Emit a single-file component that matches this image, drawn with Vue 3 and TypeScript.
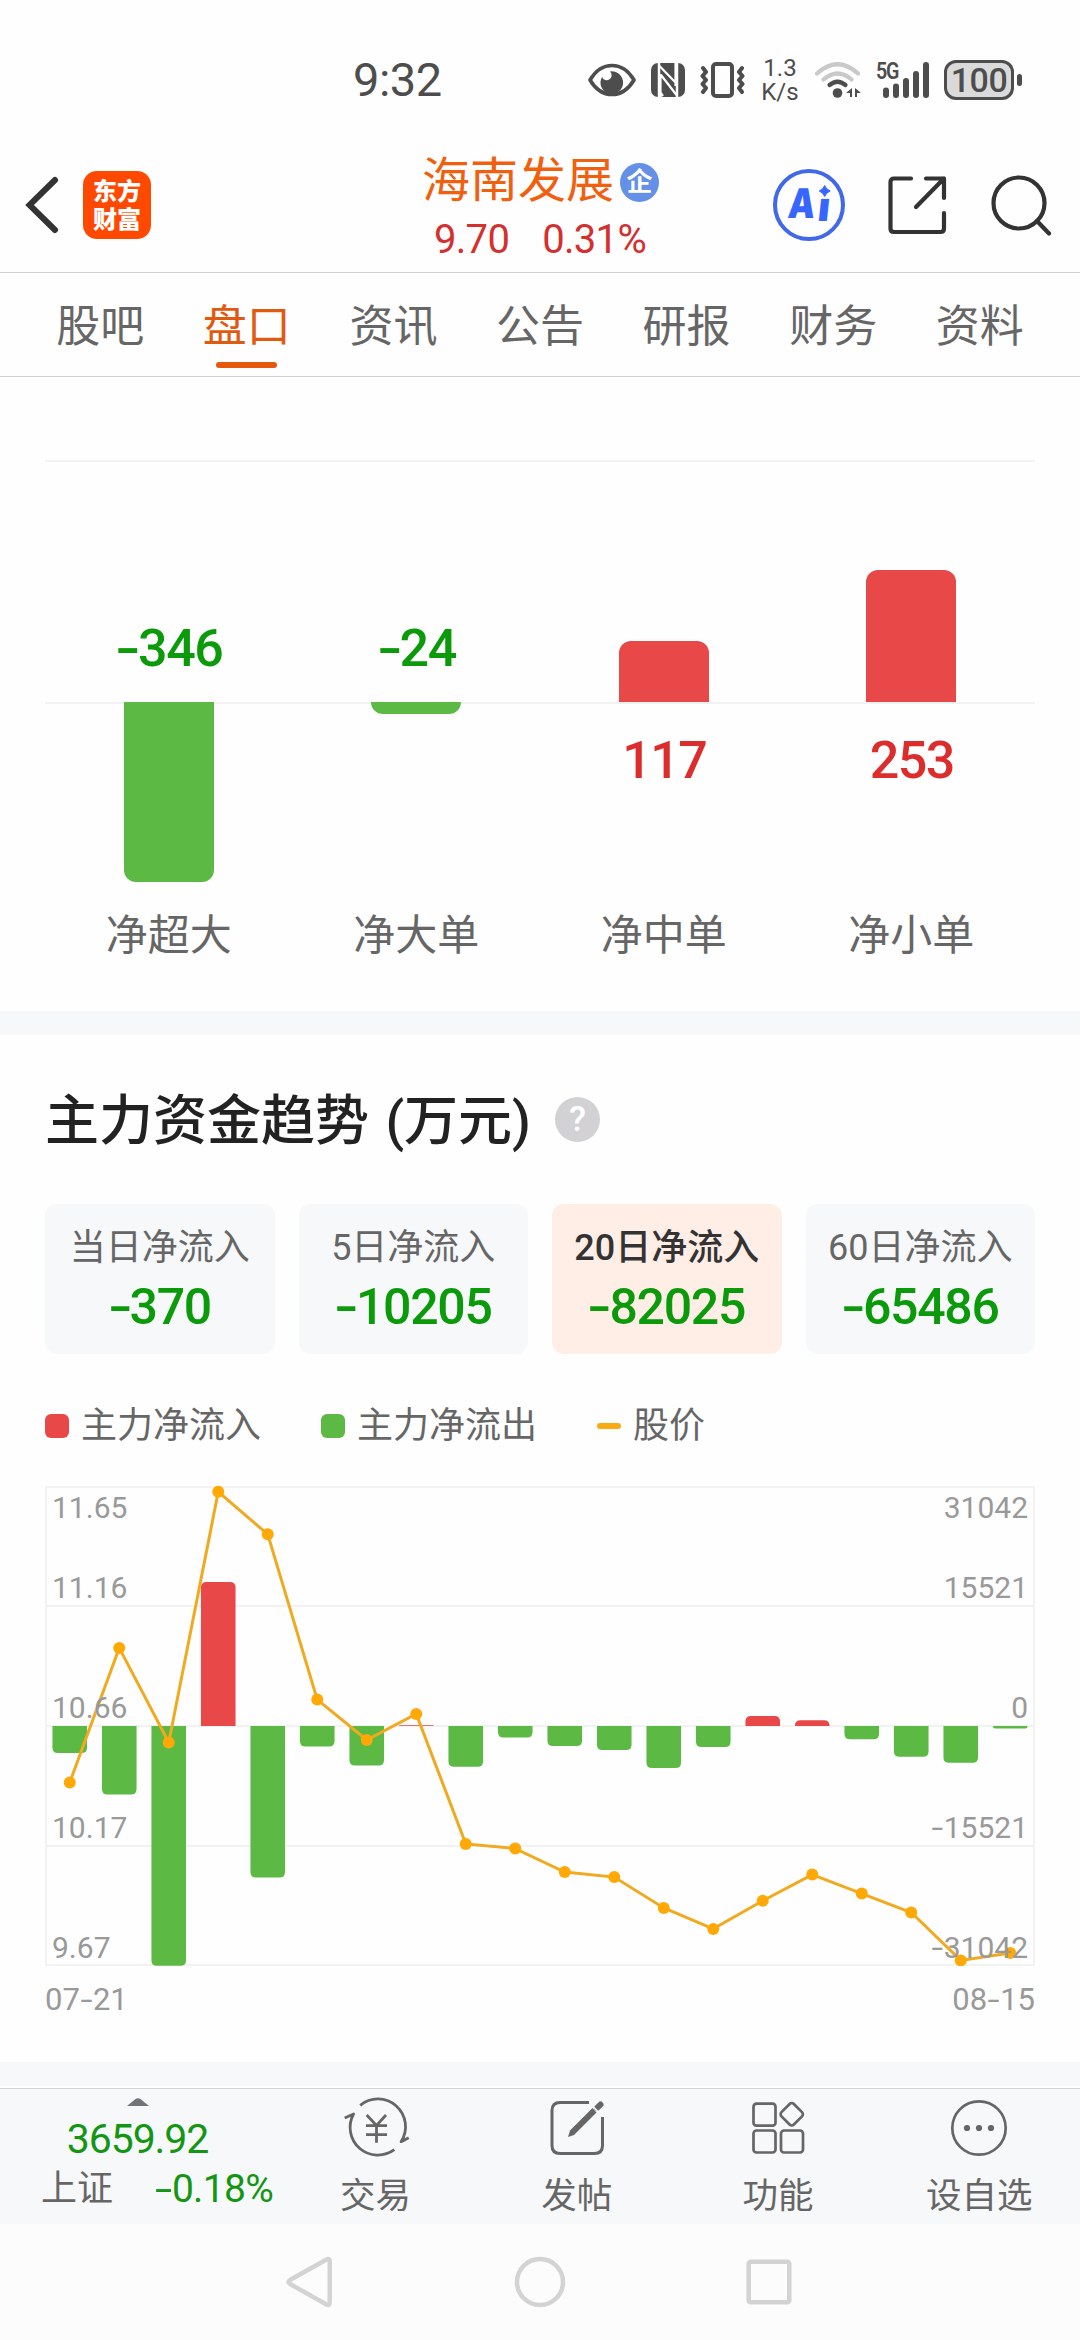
<script setup lang="ts">
interface Order { label: string; value: number; height: number }
interface Trend { label: string; value: number; active?: boolean }

const tabs: string[] = ['股吧', '盘口', '资讯', '公告', '研报', '财务', '资料']
const activeTab = '盘口'

const orders: Order[] = [
  { label: '净超大', value: -346, height: 180 },
  { label: '净大单', value: -24, height: 12 },
  { label: '净中单', value: 117, height: 61 },
  { label: '净小单', value: 253, height: 132 },
]

const trends: Trend[] = [
  { label: '当日净流入', value: -370 },
  { label: '5日净流入', value: -10205 },
  { label: '20日净流入', value: -82025, active: true },
  { label: '60日净流入', value: -65486 },
]

// Daily bar extents below (+) or above (-) the zero axis, and price line heights
const ZERO = 240
const STEP = 49.5
const flows: number[] = [27.1, 68.6, 239.7, -143.9, 151.4, 20.4, 39.6, -0.7, 40.7, 11.4, 20, 23.9, 42.1, 21.1, -10, -5.7, 13.2, 30.7, 36.8, 2.5]
const prices: number[] = [296.5, 161.9, 256.5, 5.8, 48.3, 213.6, 254, 227.9, 357.9, 362.6, 386.1, 391.1, 421.9, 442.9, 414.7, 388.6, 407.6, 426.5, 474.4, 466.9]

const cx = (i: number): number => STEP * (i + 0.5)
const barPath = (i: number, v: number): string => {
  const h = Math.abs(v)
  const r = Math.min(5.5, h)
  const s = v > 0 ? 1 : -1
  const l = cx(i) - 17.3
  const rt = cx(i) + 17.3
  const end = ZERO + v
  return `M${l} ${ZERO}V${end - s * r}Q${l} ${end} ${l + r} ${end}H${rt - r}Q${rt} ${end} ${rt} ${end - s * r}V${ZERO}Z`
}
const line = prices.map((y, i) => `${cx(i)},${y}`).join(' ')

const axis = [
  { price: '11.65', flow: 31042 },
  { price: '11.16', flow: 15521 },
  { price: '10.66', flow: 0 },
  { price: '10.17', flow: -15521 },
  { price: '9.67', flow: -31042 },
]
</script>

<template>
  <div class="page">
    <div class="status">
      <span class="time">9:32</span>
      <svg class="eye" width="48" height="34" viewBox="0 0 48 34">
        <path d="M2 17C8 7 15 2.500 24 2.500S40 7 46 17C40 27 33 31.500 24 31.500S8 27 2 17Z" fill="none" stroke="#4d4d4d" stroke-width="3.600" stroke-linejoin="round" />
        <path d="M22 8.500a11.300 11.300 0 1 1-8 5.500a5 5 0 1 0 8-5.500Z" fill="#4d4d4d" />
      </svg>
      <svg class="nfc" width="34" height="34" viewBox="0 0 34 34">
        <rect width="34" height="34" rx="7" fill="#4d4d4d" />
        <path d="M8 0V34M26 0V34" stroke="#fefefe" stroke-width="2.500" fill="none" />
        <path d="M8 2.500L25 20M9.500 11V34M10 12L25.500 32M12 33L9 29M24.500 0V23" stroke="#fefefe" stroke-width="2.200" fill="none" />
      </svg>
      <svg class="vibrate" width="46" height="38" viewBox="0 0 46 38" fill="none" stroke="#4d4d4d">
        <rect x="13" y="3" width="19" height="32" rx="3" stroke-width="4" />
        <path d="M3 7L6 11L2.500 15L6 19L2.500 23L6 27L3 31M42 7L39 11L42.500 15L39 19L42.500 23L39 27L42 31" stroke-width="4" stroke-linejoin="round" stroke-linecap="round" />
      </svg>
      <div class="speed"><span>1.3</span><span>K/s</span></div>
      <svg class="wifi" width="48" height="38" viewBox="0 0 48 38" fill="none" stroke-linecap="round" stroke-width="4.200">
        <path d="M3 12.500Q23.500-6 44 12.500M9.500 18.500Q23.500 6.500 37.500 18.500" stroke="#c9c9c9" />
        <path d="M15.500 24Q23.500 17.500 31.500 24" stroke="#4d4d4d" />
        <circle cx="23.500" cy="32" r="4.800" fill="#4d4d4d" />
        <path d="M38 27v9h-2v-4h-4zM41 27l6 5h-4v4h-2z" fill="#4d4d4d" />
      </svg>
      <div class="signal">
        <svg width="54" height="38" viewBox="0 0 54 38" stroke="#4d4d4d" stroke-width="6" stroke-linecap="round">
          <path d="M10 29.500V34M20 25.500V34M30 20V34M40 13V34M50 4V34" />
        </svg>
        <span class="net">5G</span>
      </div>
      <div class="battery"><span>100</span></div>
      <i class="nub"></i>
    </div>

    <header class="header">
      <div class="left">
        <svg class="back" width="36" height="60" viewBox="0 0 36 60"><path d="M30 5L4.500 30L30 55" fill="none" stroke="#333" stroke-width="6" stroke-linecap="round" /></svg>
        <div class="logo"><span>东方</span><span>财富</span></div>
      </div>
      <div class="stock">
        <div class="name"><span>海南发展</span><b class="corp">企</b></div>
        <div class="quote"><span>9.70</span><span>0.31%</span></div>
      </div>
      <div class="right">
        <svg width="72" height="72" viewBox="0 0 72 72">
          <circle cx="36" cy="36" r="34" fill="none" stroke="#4068e8" stroke-width="4" />
          <g class="ai-text" transform="translate(5.200 0) skewX(-6)"><text x="14" y="49.500" textLength="27" lengthAdjust="spacingAndGlyphs">A</text><text x="44" y="52" textLength="12" lengthAdjust="spacingAndGlyphs">i</text></g>
          <circle cx="51.500" cy="21" r="8.800" fill="#fefefe" />
          <path d="M51.700 16.500Q53.200 20.500 57.200 22Q53.200 23.500 51.700 27.500Q50.200 23.500 46.200 22Q50.200 20.500 51.700 16.500Z" fill="#3765ff" stroke="#3765ff" />
        </svg>
        <svg class="share" width="60" height="60" viewBox="0 0 60 60" fill="none" stroke="#333" stroke-width="4.200" stroke-linecap="round" stroke-linejoin="round">
          <path d="M24 3.500H7Q3.500 3.500 3.500 7V53.500Q3.500 57 7 57H53.500Q57 57 57 53.500V38M39 3.500H57V23M57 3.500L29 32" />
        </svg>
        <svg class="search" width="62" height="62" viewBox="0 0 62 62" fill="none" stroke="#333" stroke-width="4.200" stroke-linecap="round"><circle cx="29" cy="29" r="25.500" /><path d="M47 47L59 59.500" /></svg>
      </div>
    </header>

    <nav class="tabs">
      <div v-for="t in tabs" :key="t" class="tab" :class="{ on: t === activeTab }"><span>{{ t }}</span><i></i></div>
    </nav>

    <section class="orders">
      <div class="rule"></div>
      <div class="cols">
        <div v-for="o in orders" :key="o.label" class="col">
          <div class="up">
            <span v-if="o.value < 0" class="val green"><i class="neg">-</i>{{ -o.value }}</span>
            <div v-else class="bar red-bar" :style="{ height: o.height + 'px' }"></div>
          </div>
          <div class="down">
            <div v-if="o.value < 0" class="bar green-bar" :style="{ height: o.height + 'px' }"></div>
            <span v-else class="val red">{{ o.value }}</span>
          </div>
          <div class="cat">{{ o.label }}</div>
        </div>
      </div>
    </section>
    <div class="band"></div>

    <section class="trend">
      <h2 class="title"><span>主力资金趋势 (万元)</span><b class="help">?</b></h2>
      <div class="cards">
        <div v-for="t in trends" :key="t.label" class="card" :class="{ active: t.active }">
          <span class="card-label">{{ t.label }}</span>
          <span class="card-val"><i class="neg">-</i>{{ -t.value }}</span>
        </div>
      </div>
      <div class="legend">
        <span><i class="sq r"></i>主力净流入</span>
        <span><i class="sq g"></i>主力净流出</span>
        <span><i class="dash"></i>股价</span>
      </div>
      <div class="chart">
        <svg width="990" height="480" viewBox="0 0 990 480">
          <path d="M0 1H990M0 120H990M0 240H990M0 360H990M0 479H990M1 0V480M989 0V480" stroke="#f2f2f2" stroke-width="2" fill="none" />
          <path v-for="(v, i) in flows" :key="i" :d="barPath(i, v)" :fill="v > 0 ? '#5cb944' : '#e84848'" />
          <polyline :points="line" fill="none" stroke="#f0aa20" stroke-width="3" />
          <circle v-for="(y, i) in prices" :key="'p' + i" :cx="cx(i)" :cy="y" r="6" fill="#ffa806" />
        </svg>
        <div class="axis">
          <div v-for="a in axis" :key="a.price" class="axis-row">
            <span>{{ a.price }}</span>
            <span><i v-if="a.flow < 0" class="neg">-</i>{{ Math.abs(a.flow) }}</span>
          </div>
        </div>
      </div>
      <div class="dates"><span>07<i class="neg">-</i>21</span><span>08<i class="neg">-</i>15</span></div>
    </section>
    <div class="band last"></div>

    <footer class="bottom">
      <div class="index">
        <svg width="22" height="8" viewBox="0 0 22 8"><path d="M0 8L8.500 1Q11-.5 13.500 1L22 8Z" fill="#737478" /></svg>
        <span class="point">3659.92</span>
        <div class="change"><span>上证</span><span class="pct"><i class="neg">-</i>0.18%</span></div>
      </div>
      <div class="item">
        <svg width="70" height="64" viewBox="0 0 70 64" fill="none" stroke="#666" stroke-width="2.800">
          <path d="M19.200 9.300A27.700 27.700 0 0 1 60.100 45.700L67.700 41.700M3.700 22L12.600 18A27.700 27.700 0 0 0 53.300 53.700" stroke-linejoin="round" />
          <path d="M25.700 19L35.500 29.500L45 19M35.500 29V46.700M25 29.700H46M25 38.700H46" />
        </svg>
        <span>交易</span>
      </div>
      <div class="item">
        <svg width="58" height="64" viewBox="0 0 58 64" fill="none" stroke="#666" stroke-width="3">
          <path d="M41 6.500H12Q4 6.500 4 14.500V49.500Q4 57.500 12 57.500H46.500Q54.500 57.500 54.500 49.500V21" />
          <path d="M20 41L22 34.500L44.500 12L48.500 16.500L26 39Z" fill="#666" stroke="none" />
          <path d="M49 12L52.500 8.500" stroke-width="6" stroke-linecap="round" /><path d="M45 10.500L51 16.500" stroke="#f7f8fa" stroke-width="1.500" />
        </svg>
        <span>发帖</span>
      </div>
      <div class="item">
        <svg width="56" height="64" viewBox="0 0 56 64" fill="none" stroke="#666" stroke-width="2.700">
          <rect x="3.500" y="7.700" width="22" height="22" rx="3" /><rect x="3.500" y="34.500" width="22" height="22" rx="3" /><rect x="31" y="34.500" width="22" height="22" rx="3" />
          <rect x="33" y="9.500" width="17.500" height="17.500" rx="3" transform="rotate(45 41.750 18.250)" />
        </svg>
        <span>功能</span>
      </div>
      <div class="item">
        <svg width="64" height="64" viewBox="0 0 64 64"><circle cx="32" cy="32" r="26.700" fill="none" stroke="#666" stroke-width="2.700" /><g fill="#666"><circle cx="20" cy="32" r="3.100" /><circle cx="32" cy="32" r="3.100" /><circle cx="44" cy="32" r="3.100" /></g></svg>
        <span>设自选</span>
      </div>
    </footer>
    <div class="sysnav">
      <svg width="52" height="52" viewBox="0 0 52 52"><path d="M41.500 3.500Q44.700 2 44.700 5.500V46.500Q44.700 50 41.500 48.500L5 28Q2 26 5 24Z" /></svg>
      <svg width="52" height="52" viewBox="0 0 52 52"><circle cx="26" cy="26" r="23" /></svg>
      <svg width="52" height="52" viewBox="0 0 52 52"><rect x="5.700" y="5.700" width="40.600" height="40.600" rx="2" /></svg>
    </div>
  </div>
</template>

<style>
body { background: #fefefe; }
</style>

<style scoped>
* { box-sizing: border-box; }
i, b { font-style: normal; }
svg { display: block; flex: none; }
.page { width: 1080px; height: 2340px; overflow: hidden; background: #fefefe; color: #666; font-family: Roboto, "Noto Sans CJK SC", sans-serif; display: flex; flex-direction: column; }
.neg { display: inline-block; transform: scaleX(1.4); width: .42em; text-align: center; }

.status { height: 120px; padding: 39px 0 0 353px; display: flex; align-items: center; color: #4d4d4d; flex: none; }
.time { font-size: 47px; line-height: 54px; width: 90px; letter-spacing: -.5px; }
.eye { margin-left: 145px; }
.nfc { margin-left: 15px; }
.vibrate { margin-left: 15px; }
.speed { display: flex; flex-direction: column; align-items: center; width: 40px; margin-left: 14px; font-size: 24px; line-height: 24px; }
.wifi { margin-left: 14px; }
.signal { position: relative; margin-left: 14px; }
.net { position: absolute; left: 0; top: -3px; font-size: 24px; line-height: 26px; font-weight: 600; letter-spacing: -1.500px; transform: scaleX(.82); transform-origin: left; }
.battery { width: 70px; height: 40px; margin-left: 14px; border: 3px solid #4d4d4d; border-radius: 12px; background: #dadada; font-size: 34px; font-weight: 500; line-height: 35px; text-align: center; letter-spacing: -.5px; }
.nub { width: 5px; height: 12px; border-radius: 3px; background: #4d4d4d; margin-left: 3px; }

.header { height: 153px; flex: none; border-bottom: 1px solid #d3d3d3; display: grid; grid-template-columns: 1fr auto 1fr; }
.left { display: flex; align-items: center; padding: 18px 0 0 25px; }
.logo { margin-left: 22px; width: 68px; height: 68px; border-radius: 14px; background: #ff4800; color: #fff; font-size: 24px; font-weight: 900; line-height: 28px; display: flex; flex-direction: column; align-items: center; justify-content: center; padding-top: 1px; }
.stock { padding-top: 30px; display: flex; flex-direction: column; align-items: center; }
.name { display: flex; align-items: center; height: 62px; font-size: 48px; line-height: 62px; color: #f0600f; padding-left: 1px; }
.corp { width: 39px; height: 39px; margin: 2px 0 0 6px; border-radius: 50%; background: #6590e8; color: #fff; font-size: 26px; line-height: 38px; text-align: center; font-weight: 700; }
.quote { display: flex; gap: 33px; font-size: 40px; line-height: 56px; color: #d3302f; letter-spacing: -.7px; }
.right { display: flex; align-items: center; justify-content: flex-end; padding: 18px 28px 0 0; }
.share { margin-left: 42px; }
.search { margin-left: 43px; }
.ai-text { font: 900 41px Inter, sans-serif; fill: #3765ff; }

.tabs { height: 104px; flex: none; display: flex; padding: 0 27px; border-bottom: 1px solid #d3d3d3; }
.tab { flex: 1; display: flex; flex-direction: column; align-items: center; font-size: 44px; line-height: 60px; padding-top: 24px; }
.tab i { width: 61px; height: 6px; border-radius: 3px; margin-top: 5px; }
.tab.on { color: #e05a10; }
.tab.on i { background: #e6580c; }

.orders { height: 634px; flex: none; padding: 83px 45px 0; }
.rule { height: 2px; background: #f2f2f2; }
.cols { display: grid; grid-template-columns: repeat(4, 1fr); }
.up { height: 240px; display: flex; flex-direction: column; justify-content: flex-end; align-items: center; }
.down { height: 180px; display: flex; flex-direction: column; align-items: center; box-shadow: inset 0 2px #f2f2f2; }
.bar { width: 90px; }
.red-bar { background: #e84848; border-radius: 12px 12px 0 0; }
.green-bar { background: #5cb944; border-radius: 0 0 12px 12px; }
.val { font-size: 52px; line-height: 60px; font-weight: 500; letter-spacing: -1.500px; padding-left: 1px; }
.up .val { margin-bottom: 23px; }
.down .val { margin-top: 29px; }
.green { color: #0a9a0a; }
.red { color: #dc2c2c; }
.cat { margin-top: 29px; text-align: center; font-size: 42px; line-height: 50px; }
.band { height: 24px; flex: none; background: #f7f8fa; }
.last { margin-bottom: 2px; }

.trend { height: 1027px; flex: none; padding: 54px 45px 0; }
.title { display: flex; align-items: center; margin: 0; height: 66px; font-size: 54px; line-height: 66px; font-weight: 500; color: #222; word-spacing: 3px; }
.help { width: 45px; height: 45px; margin-left: 24px; margin-top: -5px; border-radius: 50%; background: #d2d2d4; color: #fff; font-size: 35px; line-height: 45px; text-align: center; font-weight: 500; }
.cards { display: grid; grid-template-columns: repeat(4, 1fr); gap: 24px; margin-top: 49px; }
.card { height: 150px; border-radius: 12px; background: #f7f8fa; display: flex; flex-direction: column; align-items: center; padding-top: 21px; }
.card-label { font-size: 36px; line-height: 46px; white-space: nowrap; }
.card-val { font-size: 50px; line-height: 60px; margin-top: 6px; font-weight: 500; letter-spacing: -1.300px; color: #0a9a0a; }
.active { background: #ffeee6; }
.active .card-label { color: #333; font-weight: 500; }
.legend { display: flex; gap: 60px; margin-top: 47px; font-size: 36px; line-height: 54px; height: 50px; }
.legend span { display: flex; align-items: center; gap: 12px; height: 50px; }
.sq { width: 24px; height: 24px; border-radius: 6px; }
.r { background: #e84848; }
.g { background: #5cb944; }
.dash { width: 24px; height: 6px; border-radius: 3px; background: #f9ab12; }
.chart { position: relative; height: 480px; margin-top: 35px; color: #999; }
.axis { position: absolute; inset: 0; padding: 4px 7px 0; display: flex; flex-direction: column; }
.axis-row { display: flex; justify-content: space-between; font-size: 30px; line-height: 36px; margin-top: 84px; }
.axis-row:first-child { margin-top: 0; }
.axis-row:nth-child(2) { margin-top: 44px; }
.dates { display: flex; justify-content: space-between; font-size: 31px; line-height: 36px; margin-top: 16px; color: #999; }

.bottom { height: 136px; flex: none; display: flex; background: #f7f8fa; border-top: 1px solid #d3d3d3; }
.index { width: 275px; padding-top: 9px; display: flex; flex-direction: column; align-items: center; }
.point { font-size: 41px; line-height: 48px; margin-top: 9px; color: #139613; letter-spacing: -1.100px; }
.change { display: flex; align-items: center; justify-content: space-between; align-self: stretch; padding: 0 2px 0 41px; font-size: 36px; line-height: 48px; margin-top: 2px; }
.pct { font-size: 39px; letter-spacing: -.7px; color: #139613; }
.pct .neg { width: .46em; transform: scaleX(1.6); }
.item { flex: 1; display: flex; flex-direction: column; align-items: center; padding-top: 7px; font-size: 35.500px; line-height: 48px; }
.item span { margin-top: 12px; }
.sysnav { flex: 1; background: #fcfcfc; display: flex; justify-content: center; gap: 177px; padding-top: 32px; }
.sysnav svg { fill: none; stroke: #d3d3d3; stroke-width: 4.500px; }
</style>
